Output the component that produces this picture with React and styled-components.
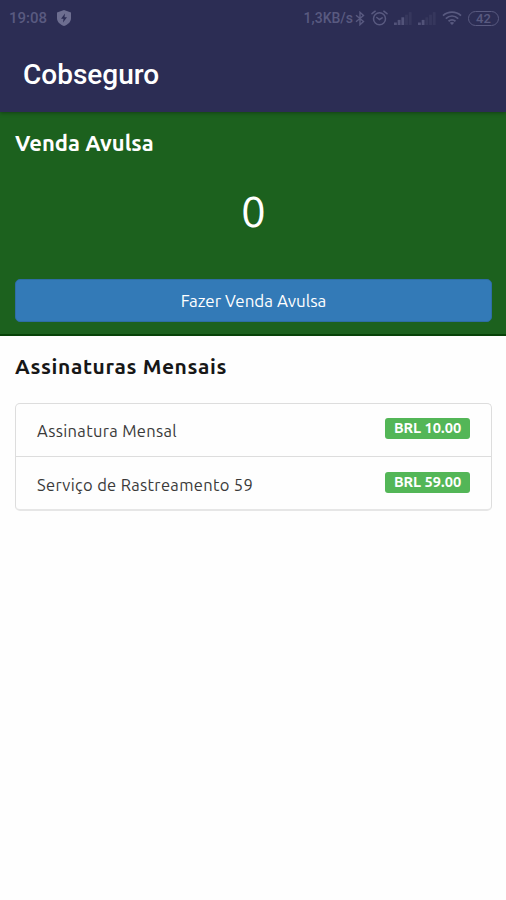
import React from 'react';
import styled, { createGlobalStyle } from 'styled-components';

const GlobalStyle = createGlobalStyle`
	* {
		box-sizing: border-box;
	}
	body {
		margin: 0;
		background: #fefefe;
		font-family: 'Ubuntu', 'Noto Sans', sans-serif;
	}
`;

const Screen = styled.div`
	width: 100%;
	min-height: 900px;
	background: #fefefe;
`;

const Header = styled.header`
	height: 112px;
	background: #2c2d54;
	font-family: Roboto, sans-serif;
	box-shadow: 0 1px 4px rgba(0, 0, 0, 0.35);
	position: relative;
`;

const StatusBar = styled.div`
	height: 36px;
	padding: 0 7px 0 9px;
	display: flex;
	align-items: center;
	justify-content: space-between;
	color: #595a80;
`;

const StatusGroup = styled.div`
	display: flex;
	align-items: center;

	svg {
		display: block;
		margin-left: ${(props) => props.$gap || 0}px;
	}
`;

const Clock = styled.span`
	font-size: 15px;
	font-weight: 500;
`;

const Speed = styled.span`
	font-size: 14px;
	font-weight: 500;
`;

const AppTitle = styled.h1`
	margin: 0;
	padding: 0 23px;
	line-height: 78px;
	font-size: 28px;
	font-weight: 500;
	color: #fff;
`;

const SalePanel = styled.section`
	height: 224px;
	padding: 16px 14px 12px 15px;
	display: flex;
	flex-direction: column;
	background: #1c611e;
	border-bottom: 2px solid #074208;
	color: #fff;
`;

const Heading = styled.h2`
	margin: 0;
	line-height: 30px;
	font-size: ${(props) => props.$size}px;
	font-weight: ${(props) => props.$weight};
	letter-spacing: ${(props) => props.$spacing}px;
`;

const Counter = styled.div`
	flex: 1;
	padding-bottom: 15px;
	display: flex;
	align-items: center;
	justify-content: center;
	font-size: 44px;
	line-height: 1;
`;

const SaleButton = styled.button`
	height: 43px;
	padding: 0;
	border: 1px solid #2e6da4;
	border-radius: 5px;
	background: #337ab7;
	color: #fff;
	font-family: inherit;
	font-size: 17px;
`;

const Subscriptions = styled.section`
	padding: 15px 14px 0 15px;
	color: #171717;
`;

const List = styled.ul`
	margin: 22px 0 0;
	padding: 0;
	list-style: none;
	border: 1px solid #ddd;
	border-bottom: 2px solid #e6e6e6;
	border-radius: 5px;
`;

const Item = styled.li`
	height: 52px;
	padding: 0 21px;
	display: flex;
	align-items: center;
	justify-content: space-between;

	& + & {
		border-top: 1px solid #ddd;
		height: 53px;
		padding-top: 2px;
	}
`;

const ItemName = styled.span`
	padding-top: 1px;
	font-size: 16.5px;
	color: #3a3a3a;
	letter-spacing: 0.33px;
`;

const Price = styled.span`
	width: 85px;
	height: 21px;
	margin-bottom: 3px;
	border-radius: 3px;
	background: #53b657;
	color: #fff;
	font-size: 14.6px;
	font-weight: 700;
	line-height: 20px;
	text-align: center;
	white-space: nowrap;
`;

const subscriptions = [
	{ name: 'Assinatura Mensal', price: 'BRL 10.00' },
	{ name: 'Serviço de Rastreamento 59', price: 'BRL 59.00' },
];

const ShieldIcon = () => (
	<svg width="14" height="16" viewBox="0 0 14 16">
		<path
			d="M7 0 14 2.500V8c0 4-3 6.500-7 8-4-1.500-7-4-7-8V2.500z"
			fill="#6d6e90"
		/>
		<path d="M8 3.500 4 8.700h2.500L6 12.500l4-5.300H7.500z" fill="#2c2d54" />
	</svg>
);

const BluetoothIcon = () => (
	<svg width="10" height="15" viewBox="0 0 10 15">
		<path
			d="M1 4.200 8.500 10.500 5 13.700V1.300l3.500 3.200L1 10.800"
			fill="none"
			stroke="currentColor"
			strokeWidth="1.4"
		/>
	</svg>
);

const AlarmIcon = () => (
	<svg width="17" height="16" viewBox="0 0 17 16">
		<g
			fill="none"
			stroke="currentColor"
			strokeWidth="1.5"
			strokeLinecap="round"
		>
			<circle cx="8.5" cy="8.7" r="6" />
			<path d="M1 3.700 4.200 1.200M16 3.700 12.800 1.200M5.800 7.500l2.700 2 2.700-1.700" />
		</g>
	</svg>
);

// bars: how many of the five bars are lit
const SignalIcon = ({ bars }) => (
	<svg width="18" height="14" viewBox="0 0 18 14">
		{[0, 1, 2, 3, 4].map((i) => (
			<rect
				key={i}
				x={i * 3.7}
				y={11.5 - i * 2.6}
				width="2.8"
				height={2.5 + i * 2.6}
				fill="currentColor"
				opacity={i < bars ? 0.85 : 0.22}
			/>
		))}
	</svg>
);

const WifiIcon = () => (
	<svg width="20" height="14" viewBox="0 0 20 14">
		<g fill="none" stroke="currentColor" strokeWidth="1.8">
			<path d="M1 4.700c5.200-4.700 12.800-4.700 18 0M3.800 7.600c3.700-3.200 8.700-3.200 12.400 0M6.500 10.300c2.200-1.700 4.800-1.700 7 0" />
		</g>
		<path d="M7.800 11.700c1.400-1 3-1 4.400 0L10 14z" fill="currentColor" />
	</svg>
);

const Battery = styled.span`
	width: 31px;
	height: 15px;
	margin-left: 6px;
	border: 1.5px solid currentColor;
	border-radius: 8px;
	font-size: 13px;
	font-weight: 500;
	line-height: 13px;
	text-align: center;
`;

const App = () => {
	return (
		<>
			<GlobalStyle />
			<Screen>
				<Header>
					<StatusBar>
						<StatusGroup $gap={10}>
							<Clock>19:08</Clock>
							<ShieldIcon />
						</StatusGroup>
						<StatusGroup $gap={6}>
							<Speed>1,3KB/s</Speed>
							<StatusGroup $gap={2}>
								<BluetoothIcon />
							</StatusGroup>
							<AlarmIcon />
							<SignalIcon bars={3} />
							<SignalIcon bars={2} />
							<WifiIcon />
							<Battery>42</Battery>
						</StatusGroup>
					</StatusBar>
					<AppTitle>Cobseguro</AppTitle>
				</Header>
				<SalePanel>
					<Heading $size={22} $weight={700} $spacing={0}>
						Venda Avulsa
					</Heading>
					<Counter>0</Counter>
					<SaleButton>Fazer Venda Avulsa</SaleButton>
				</SalePanel>
				<Subscriptions>
					<Heading $size={21} $weight={600} $spacing={0.6}>
						Assinaturas Mensais
					</Heading>
					<List>
						{subscriptions.map((item) => (
							<Item key={item.name}>
								<ItemName>{item.name}</ItemName>
								<Price>{item.price}</Price>
							</Item>
						))}
					</List>
				</Subscriptions>
			</Screen>
		</>
	);
};

export default App;
